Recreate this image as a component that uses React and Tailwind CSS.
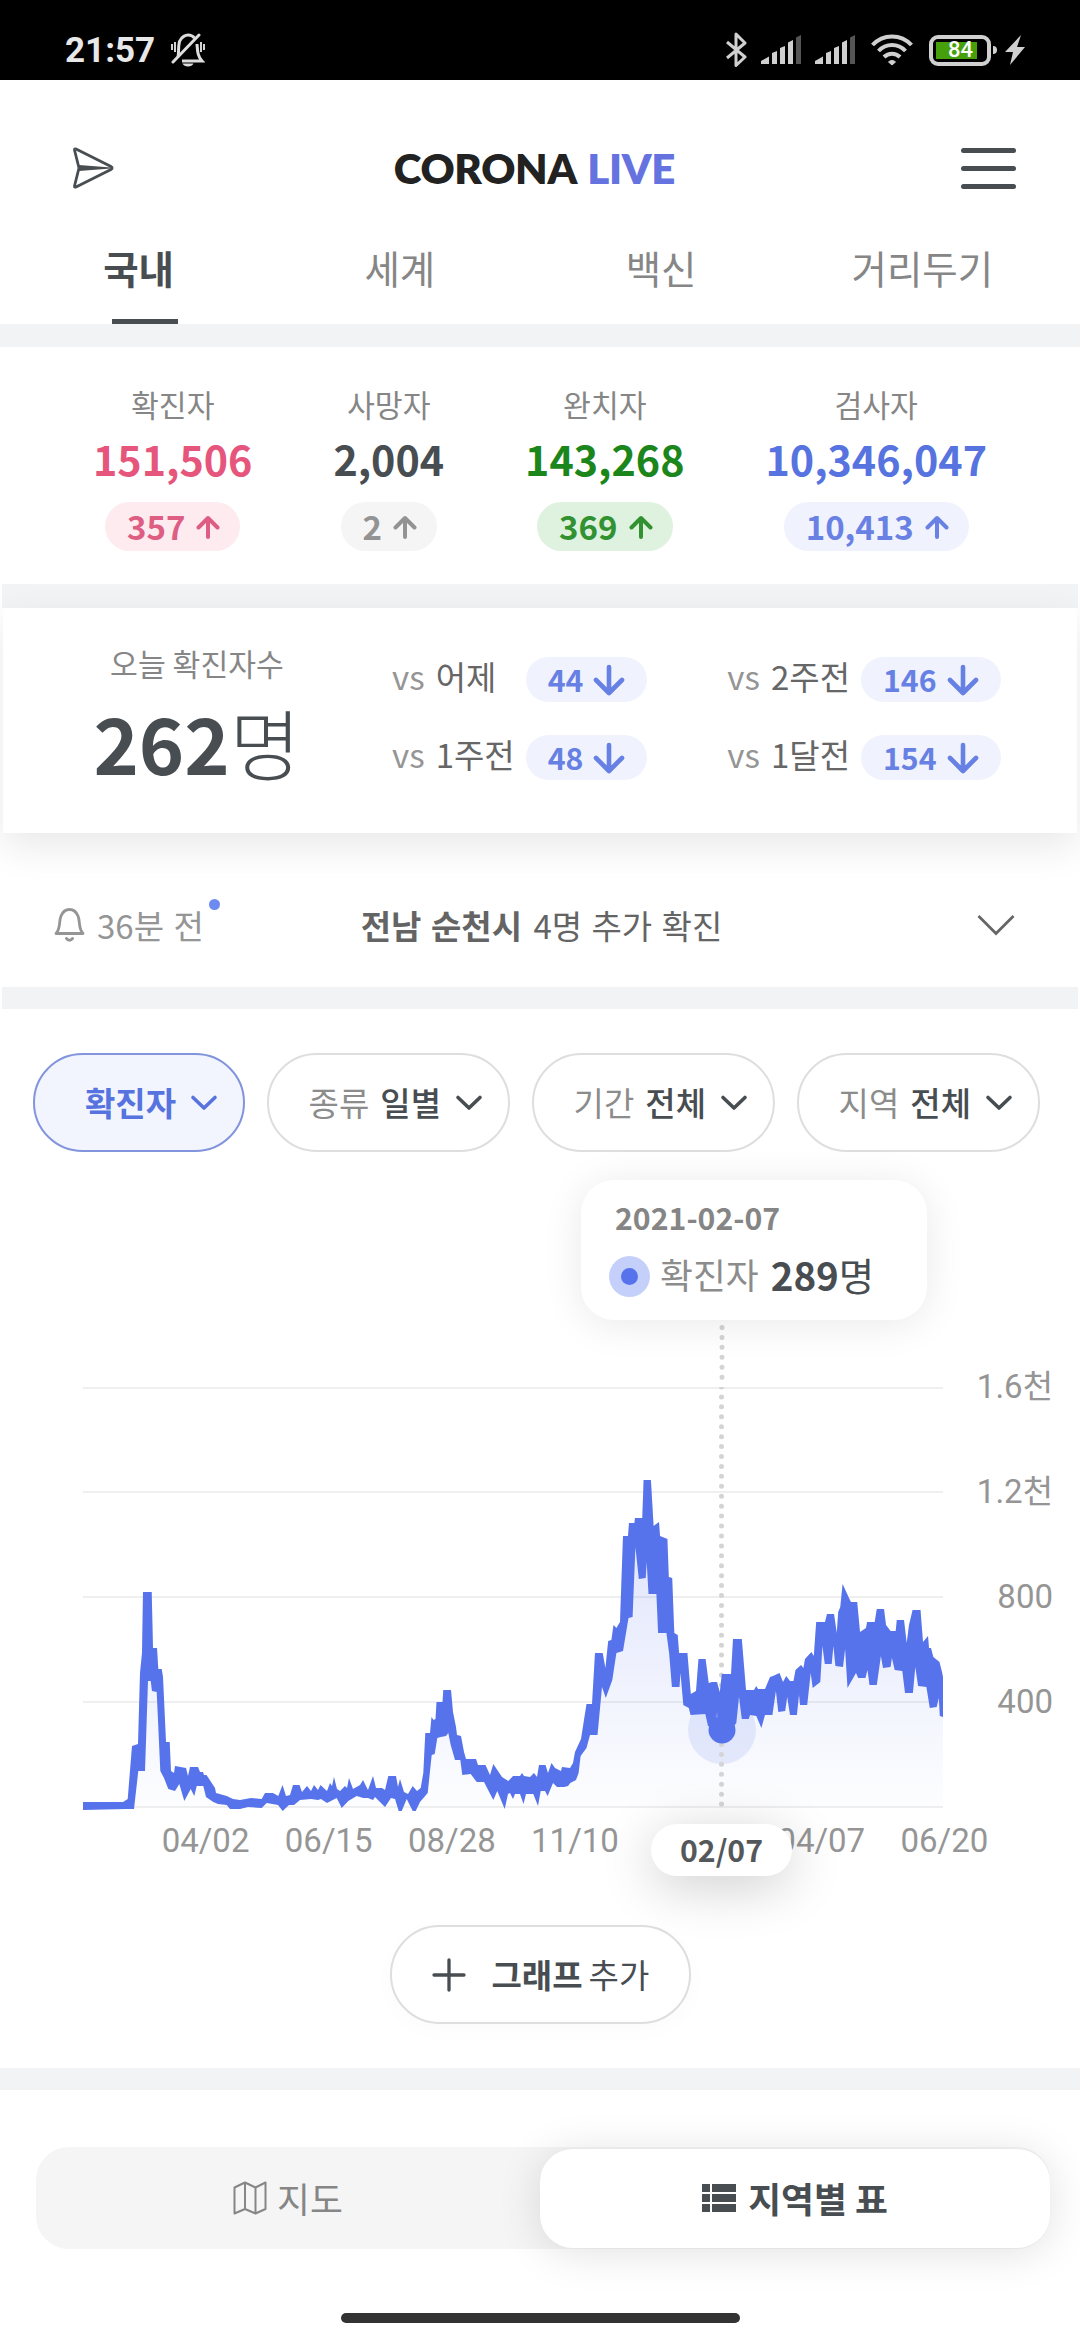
import { useState } from "react";

const BLUE = "#5673eb";

const tabs = ["국내", "세계", "백신", "거리두기"];

const totals = [
  {
    label: "확진자",
    value: "151,506",
    delta: "357",
    color: "text-[#e6567c]",
    pill: "bg-[#fdebef] text-[#de5d83]",
  },
  {
    label: "사망자",
    value: "2,004",
    delta: "2",
    color: "text-[#474d51]",
    pill: "bg-[#f5f5f5] text-[#939393]",
  },
  {
    label: "완치자",
    value: "143,268",
    delta: "369",
    color: "text-[#1b861b]",
    pill: "bg-[#dff1df] text-[#329232]",
  },
  {
    label: "검사자",
    value: "10,346,047",
    delta: "10,413",
    color: "text-[#5673e0]",
    pill: "bg-[#f0f3fe] text-[#6a81e4]",
  },
];

const comparisons = [
  [
    { label: "어제", value: "44" },
    { label: "1주전", value: "48" },
  ],
  [
    { label: "2주전", value: "146" },
    { label: "1달전", value: "154" },
  ],
];

const filters = [
  { value: "확진자", active: true },
  { name: "종류", value: "일별" },
  { name: "기간", value: "전체" },
  { name: "지역", value: "전체" },
];

const yTicks = ["1.6천", "1.2천", "800", "400"];
// the fifth slot sits under the selected date
const xTicks = ["04/02", "06/15", "08/28", "11/10", "", "04/07", "06/20"];

// daily confirmed cases on a 860 x 424 area: highs left to right, lows right to left
const highs =
  "0,415 40,415 44.7,412 49,359 55,357 57,286 59,266 60,205 68.7,205 70,261 74,261 75.3,282 78.7,282 80,290 83,355 86.7,355 88,384 91,386 92,379 103,381 105,389 107,380 115,380 117,385 120,385 121,388 123.5,388 132,401 133,406 143.7,409 150,412 157,413 168,411 178.7,412 182,406 190,406 195.3,409 199.5,398 203,409 207,408 210,398 216.5,398 219,405 224,399 228,404 231,398 235,403 237.5,398 244,404 247,396 249,399 251,390 254,402 257,404 262,399 264,401 266,391 270,402 277,398 280,393 285,403 290,389 293,401 299,401 302,403 305.3,389 313,389 315,400 317,392 321,405 325,407 329.7,399 334,404 337.7,401 340.3,386 342.3,346 347,346 348.5,330 350.5,333 352.5,332 353.5,315 359.5,315 360.3,303 368,303 370,325 373,340 374,348 378,349 381,365 383,372 393,372 395,378 402.5,378 407,388 410.3,377 415,384 419,390 425.3,394 430,389 437,389 439,386 441,389 447,390 451,386 454,390 456,378 462.5,378 465,386 468.5,376 472,381 478,384 479,380 487,381 490,376 492,365 498,352 503.5,317 509,317 512,266 519.7,266 522.4,281 525.2,254 528.4,253 530.5,238 533.4,241 537,235 540,149 545,149 546,136 551.4,136 552,131 559.3,131 560.6,93 567.9,93 570.6,139 576,135 577,149 584.4,152 585.8,190 589.2,191 591.3,246 594.7,248 596.1,266 604.4,266 607.8,307 613,304 615.5,272 622.6,272 625.7,296 629,295 634,295 636.8,305 638.8,287 648,287 650,252 658.8,252 663,303 671,303 673.3,299 675,302 682,302 687,290 690,289 696.5,286 700,295 703.2,289 707,294 710.5,294 712.5,283 718,278 720.4,281 722,272 728.4,265 730.8,269 733.2,235 742,235 744,227 751,227 753.8,246 755.2,225 757.3,220 759.6,197 766.9,213 768,215 774.2,215 777,245 783,241 784.1,235 791.7,235 793.8,222 801,222 803,238 807.6,244 812.7,244 813.8,233 821,233 823.7,256 826,238 829.6,223 837.5,223 840,255 845,249 846,261 848,261 850.3,270 856.5,275 859,285 860,290";

const lows =
  "860,330 856.8,329 855.8,311 853.7,320 846.8,321 843.4,300 835.1,299 832.3,280 829.9,306 822,306 819.3,284 811.7,283 808.9,271 807.6,280 800,281 797.9,269 793.8,298 786.5,298 784.5,283 782.4,291 775.2,291 773,286 764.5,301 762.1,262 760,280 752.4,279 750.4,259 748.7,277 741.8,277 739.4,259 737.3,295 729.7,301 727.7,286 724.2,318 717,318 716,308 713.9,328 707,328 704.2,310 702.2,324 695.3,325 692.9,304 689.4,328 682,328 678.4,341 673.3,329 667,328 665.7,332 658.8,332 656,310 653.3,336 648,343 640,345 635,343 634,325 633,342 625,339 622.3,327 607.5,328 605.8,321 600.3,318 597.5,286 596.5,300 588.9,300 586.1,266 583.4,246 575.1,246 573.4,207 565.5,207 563.7,175 562.7,191 555.8,192 552.4,160 549.6,230 545.5,231 540,264 533.4,266 529.3,293 522.8,311 519,300 514.5,348 507,348 503.5,361 497.6,369 495.6,386 493,393 487.3,396 485,399 481,400 479,400 474,400 470,396 464.6,409 462,404 457.7,404 455,419 450.3,407 443,407 440.5,417 437,407 432,407 430,412 427,406 425,407 421.7,422 414.3,404 410.3,413 401,395 393.7,395 387.7,387 379.3,388 377.3,373 372,373 367.7,358 365.3,346 363,349 357.7,350 354.3,351 351.7,367 348.7,368 344.7,406 337,415 332.7,424 329.7,424 323.7,412 318.7,424 315.7,424 312,412 308,411 302,420 292,410 290,413 285,411 280.3,411 273.7,409 265.3,414 258.7,421 253.7,411 244,416 238,412 235,413 228,412 217,413 211,418 206,418 199.7,424 195,418 183.7,416 178.7,421 165,420 157,422 147,422 143.7,418 135,417 130.3,415 123,410 120.3,399 113.7,399 111.3,409 107.7,402 101.3,414 96.3,397 92,404 85.3,402 81,391 77.3,384 73.7,305 69,304 67.7,294 65,294 62,384 55.3,384 51,422 43.7,422 0,423";

const ArrowUp = () => (
  <svg viewBox="0 0 24 24" className="w-6 h-6" fill="none">
    <path
      d="M12 22V3.5M2.5 12.5L12 3L21.5 12.5"
      stroke="currentColor"
      strokeWidth="4"
      strokeLinecap="round"
      strokeLinejoin="round"
    />
  </svg>
);

const ArrowDown = () => (
  <svg viewBox="0 0 32 32" className="w-8 h-8" fill="none">
    <path
      d="M16 3V28M3 16L16 29L29 16"
      stroke="currentColor"
      strokeWidth="4.6"
      strokeLinecap="round"
      strokeLinejoin="round"
    />
  </svg>
);

const Chevron = () => (
  <svg viewBox="0 0 28 18" className="w-7 h-[18px]" fill="none">
    <path
      d="M3 3.5L14 14L25 3.5"
      stroke="currentColor"
      strokeWidth="3.6"
      strokeLinecap="round"
      strokeLinejoin="round"
    />
  </svg>
);

const Signal = () => (
  <svg viewBox="0 0 40 30" className="w-10 h-[30px]">
    <path d="M0 26L8 21.5V29H0Z" fill="#d0d0d0" />
    <path d="M11 18L16 16V29H11Z" fill="#d0d0d0" />
    <path d="M19 13L24 11V29H19Z" fill="#d0d0d0" />
    <path d="M27 7.5L32 5V29H27Z" fill="#d0d0d0" />
    <path d="M35 2.5L40 0V29H35Z" fill="#555" />
  </svg>
);

const StatusBar = () => (
  <div className="flex h-20 items-center bg-black pl-[65px] pr-[55px] pt-5 text-[#e8e8e8]">
    <span className="font-bold text-[35px] leading-none [font-family:Roboto,sans-serif]">
      21:57
    </span>
    <svg viewBox="0 0 34 34" className="ml-4 h-[34px] w-[34px]" fill="none">
      <path
        d="M7 24C8 20 7 14 8.5 8.500C10.500 3.500 15 2 17 2C19 2 21.500 2.500 23.500 5M26 11C26.500 18 26.500 23 31 28H11"
        stroke="#ddd"
        strokeWidth="3"
      />
      <path d="M11.500 30.500H22.500C21 34.500 13 34.500 11.500 30.500Z" fill="#ddd" />
      <path
        d="M28 2L2 29"
        stroke="#ddd"
        strokeWidth="3"
        strokeLinecap="round"
      />
      <path
        d="M1 11V17M4 9V19M30 9V19M33 11V17"
        stroke="#ddd"
        strokeWidth="1.9"
      />
    </svg>

    <div className="ml-auto flex items-center">
      <svg viewBox="0 0 22 36" className="h-9 w-[22px]" fill="none">
        <path
          d="M2 10L20 25L11 33.5V2L20 11L2 26"
          stroke="#d0d0d0"
          strokeWidth="3"
          strokeLinejoin="round"
        />
      </svg>
      <span className="ml-3.5">
        <Signal />
      </span>
      <span className="ml-3.5">
        <Signal />
      </span>
      <svg viewBox="0 0 42 32" className="ml-4 h-8 w-[42px]" fill="none">
        <path
          d="M1.5 11C12 -0.500 30 -0.500 40.5 11M7.5 17C15 9 27 9 34.5 17M13 23C17.5 18.5 24.500 18.500 29 23"
          stroke="#d0d0d0"
          strokeWidth="4"
        />
        <path
          d="M17.500 28C19.500 26 22.500 26 24.500 28L21 31Z"
          fill="#d0d0d0"
          stroke="#d0d0d0"
        />
      </svg>
      <div className="ml-4 flex h-[31px] w-[62px] items-center rounded-[9px] border-4 border-[#d0d0d0] p-[3px]">
        <div className="flex h-[17px] w-[41px] items-center justify-center bg-[#46a00c] pl-2 text-[22px] font-medium leading-none text-white [font-family:Roboto,sans-serif]">
          84
        </div>
      </div>
      <div className="ml-0.5 h-2 w-1 rounded-r bg-[#d0d0d0]" />
      <svg viewBox="0 0 20 30" className="ml-2 h-[30px] w-5">
        <path d="M16 0L0 17H8L5 30L20 12H12Z" fill="#d0d0d0" />
      </svg>
    </div>
  </div>
);

const Header = () => (
  <header className="flex h-[176px] items-center justify-between pl-[72px] pr-16">
    <svg viewBox="0 0 42 42" className="h-[42px] w-[42px]" fill="none">
      <path
        d="M2.500 3C2.300 2 3 1.500 4 2L39 19.500C40.500 20.300 40.500 21.700 39 22.500L4 40C3 40.500 2.300 40 2.500 39L7 21Z"
        stroke="#474d51"
        strokeWidth="2.8"
        strokeLinejoin="round"
      />
      <path d="M7 18L39 20.500V21.500L7 24Z" fill="#474d51" />
    </svg>
    <h1 className="flex gap-2.5 pr-1.5 text-[42px] font-extrabold leading-none tracking-[-0.25px] text-[#222] [font-family:Lato,sans-serif]">
      CORONA <span className="text-[#6573e0]">LIVE</span>
    </h1>
    <button className="flex w-[55px] flex-col gap-[13px]">
      <span className="h-[5px] rounded-full bg-[#474d51]" />
      <span className="h-[5px] rounded-full bg-[#474d51]" />
      <span className="h-[5px] rounded-full bg-[#474d51]" />
    </button>
  </header>
);

const Tabs = ({ selected, onSelect }) => (
  <nav className="flex h-[68px] pl-[7px] pr-7">
    {tabs.map((tab, i) => (
      <button
        key={tab}
        onClick={() => onSelect(i)}
        className={
          i === selected
            ? "flex flex-1 flex-col items-center justify-between font-bold text-[#474d51]"
            : "flex flex-1 flex-col items-center justify-between text-[#868686]"
        }
      >
        <span className="-mt-2 ml-0.5 text-[38.5px] leading-[38px]">{tab}</span>
        {i === selected && (
          <span className="ml-3.5 h-[5px] w-[66px] bg-[#474d51]" />
        )}
      </button>
    ))}
  </nav>
);

const Totals = () => (
  <section className="flex h-[237px] justify-between bg-white px-[93px] pt-[42px]">
    {totals.map(({ label, value, delta, color, pill }) => (
      <div key={label} className="flex flex-col items-center">
        <span className="text-[30.25px] leading-[30px] text-[#868686]">
          {label}
        </span>
        <span
          className={`mt-[14px] text-[41.25px] font-bold leading-[50px] ${color}`}
        >
          {value}
        </span>
        <span
          className={`mt-[19px] flex h-[49px] items-center gap-[11px] rounded-full pl-[22px] pr-5 text-[33px] font-bold leading-none ${pill}`}
        >
          {delta}
          <ArrowUp />
        </span>
      </div>
    ))}
  </section>
);

const Today = () => (
  <section className="relative mx-[3px] flex h-[225px] bg-white pl-[92px] shadow-[0_14px_36px_rgba(0,0,0,0.09)]">
    <div className="flex w-[204px] flex-col items-center pt-10">
      <span className="text-[30.25px] leading-[30px] text-[#868686]">
        오늘 확진자수
      </span>
      <span className="mt-6 flex text-[77px] leading-[80px] text-[#474d51]">
        <b>262</b>
        <span className="font-light">명</span>
      </span>
    </div>
    <div className="ml-[93px] flex gap-[80px] pt-[49px]">
      {comparisons.map((column, i) => (
        <div key={i} className="flex flex-col gap-[33px]">
          {column.map(({ label, value }) => (
            <div
              key={label}
              className="flex h-[45px] items-center text-[33px] leading-none"
            >
              <span className="pb-1.5 text-[#959595]">vs</span>
              <span className="ml-[11px] w-[90px] whitespace-nowrap pb-1.5 text-[#666]">
                {label}
              </span>
              <span className="flex h-[45px] items-center gap-[10px] rounded-full bg-[#f0f3fe] px-[22px] text-[30.25px] font-bold text-[#6780e4]">
                {value}
                <ArrowDown />
              </span>
            </div>
          ))}
        </div>
      ))}
    </div>
  </section>
);

const Notice = () => (
  <section className="flex h-[154px] items-center bg-white pl-[54px] pr-[65px] pt-[30px] text-[33px] leading-none [word-spacing:2px]">
    <div className="relative flex items-center text-[#959595]">
      <svg viewBox="0 0 31 36" className="mr-3 h-9 w-[31px]" fill="none">
        <path
          d="M2 26.500C7 21 4.500 15 7 9C9 4 12.500 2.500 15.500 2.500C18.500 2.500 22 4 24 9C26.500 15 24 21 29 26.500Z"
          stroke="currentColor"
          strokeWidth="2.8"
          strokeLinejoin="round"
        />
        <path
          d="M12.500 31.500C14 33.800 17 33.800 18.500 31.500"
          stroke="currentColor"
          strokeWidth="3"
          strokeLinecap="round"
        />
      </svg>
      36분 전
      <span className="absolute -right-4 -top-2 h-[11px] w-[11px] rounded-full bg-[#6c8af0]" />
    </div>
    <p className="ml-[157px] text-[#646464]">
      <b className="mr-0.5">전남 순천시</b> 4명 추가 확진
    </p>
    <svg
      viewBox="0 0 38 22"
      className="ml-auto h-[22px] w-[38px]"
      fill="none"
    >
      <path d="M1.5 2L19 19.5L36.5 2" stroke="#666" strokeWidth="2.8" />
    </svg>
  </section>
);

const Filters = () => (
  <div className="flex gap-[22px] pl-[33px] text-[33px] leading-none">
    {filters.map(({ name, value, active }, i) => (
      <button
        key={i}
        className={
          active
            ? "flex h-[99px] w-[212px] items-center justify-end rounded-full border-2 border-[#8294dc] bg-[#f2f5fe] pr-[25px] text-[#5673e0]"
            : "flex h-[99px] w-[243px] items-center justify-end rounded-full border-2 border-[#dedede] pr-[25px] text-[#474d51]"
        }
      >
        {name && <span className="mr-[11px] text-[#8c8c8c]">{name}</span>}
        <span className={active ? "mr-3.5 font-bold" : "mr-3.5 font-medium"}>
          {value}
        </span>
        <Chevron />
      </button>
    ))}
  </div>
);

const Chart = () => (
  <div className="relative mt-[235px] h-[538px] pl-[83px]">
    <div className="flex">
      <svg viewBox="0 0 860 424" className="h-[424px] w-[860px]">
        <defs>
          <linearGradient
            id="area"
            gradientUnits="userSpaceOnUse"
            x1="0"
            y1="93"
            x2="0"
            y2="420"
          >
            <stop offset="0" stopColor={BLUE} stopOpacity="0.22" />
            <stop offset="1" stopColor={BLUE} stopOpacity="0.01" />
          </linearGradient>
        </defs>
        {[1, 105, 210, 315, 420].map((y) => (
          <line
            key={y}
            x1="0"
            x2="860"
            y1={y}
            y2={y}
            stroke="#efefef"
            strokeWidth="2"
          />
        ))}
        <polygon points={`0,420 ${highs} 860,420`} fill="url(#area)" />
        <circle cx="639" cy="343" r="34" fill={BLUE} fillOpacity="0.13" />
        <line
          x1="638.5"
          x2="638.5"
          y1="0"
          y2="424"
          stroke="#d4d4d4"
          strokeWidth="5"
          strokeLinecap="round"
          strokeDasharray="0 9.93"
        />
        <polygon points={`${highs} ${lows}`} fill={BLUE} />
        <circle cx="639" cy="343" r="13.5" fill={BLUE} />
      </svg>
      <ul className="-mt-5 ml-auto flex flex-col gap-[65px] pr-[27px] text-right text-[33px] leading-10 text-[#959595] [font-family:Roboto,'Noto_Sans_CJK_KR',sans-serif]">
        {yTicks.map((tick) => (
          <li key={tick}>{tick}</li>
        ))}
      </ul>
    </div>
    <div className="ml-[61px] mt-2.5 flex w-[862px] text-center text-[33px] leading-10 text-[#959595] [font-family:Roboto,sans-serif]">
      {xTicks.map((tick, i) => (
        <span key={i} className="flex-1">
          {tick}
        </span>
      ))}
    </div>

    {/* cursor line above the plot */}
    <svg
      viewBox="0 0 6 64"
      className="absolute left-[718.5px] -top-[62px] h-16 w-1.5"
    >
      <line
        x1="3"
        x2="3"
        y1="2.5"
        y2="56"
        stroke="#d4d4d4"
        strokeWidth="5"
        strokeLinecap="round"
        strokeDasharray="0 9.93"
      />
    </svg>

    {/* tooltip */}
    <div className="absolute -top-[207px] left-[581px] h-[140px] w-[346px] rounded-[33px] bg-white shadow-[0_4px_40px_rgba(0,0,0,0.09)]">
      <div className="ml-[34px] mt-[19px] text-[30.25px] font-bold leading-9 text-[#858585]">
        2021-02-07
      </div>
      <div className="ml-7 mt-[19px] flex items-center leading-10">
        <span className="mr-2.5 flex h-[41px] w-[41px] items-center justify-center rounded-full bg-[#c5d0fa]">
          <span className="h-[17px] w-[17px] rounded-full bg-[#5673eb]" />
        </span>
        <span className="pb-1 text-[35.75px] text-[#8c8c8c]">확진자</span>
        <span className="ml-3 pb-1 text-[38.5px] text-[#474d51]">
          <b>289</b>명
        </span>
      </div>
    </div>
    <div className="absolute left-[651px] top-[437px] flex h-[52px] w-[141px] items-center justify-center rounded-full bg-white text-[30.25px] font-bold text-[#55585a] shadow-[0_10px_54px_rgba(0,0,0,0.2)]">
      02/07
    </div>
  </div>
);

const ViewSwitch = () => (
  <div className="ml-9 flex h-[102px] w-[1014px] items-center rounded-[33px] bg-[#f5f5f5] text-[35.75px] leading-none">
    <button className="flex flex-1 items-center justify-center gap-2.5 text-[#868686]">
      <svg viewBox="0 0 34 34" className="h-[34px] w-[34px]" fill="none">
        <path
          d="M1.500 6.500L12 1.500V28L1.500 32.500ZM12 1.500L22.500 6.500V32.500L12 28M22.500 6.500L32.500 1.500V28L22.500 32.500"
          stroke="currentColor"
          strokeWidth="2"
          strokeLinejoin="round"
        />
      </svg>
      지도
    </button>
    <button className="flex h-[99px] w-[510px] items-center justify-center gap-3 rounded-[33px] bg-white font-bold text-[#474d51] shadow-[0_4px_44px_rgba(0,0,0,0.12)]">
      <svg viewBox="0 0 34 28" className="h-7 w-[34px]" fill="currentColor">
        <path d="M0 0H8V8H0ZM10 0H34V8H10ZM0 10H8V18H0ZM10 10H34V18H10ZM0 20H8V28H0ZM10 20H34V28H10Z" />
      </svg>
      지역별 표
    </button>
  </div>
);

const App = () => {
  const [selectedTab, setSelectedTab] = useState(0);

  return (
    <div className="h-[2340px] w-[1080px] overflow-hidden bg-white [font-family:'Noto_Sans_CJK_KR',sans-serif]">
      <StatusBar />
      <Header />
      <Tabs selected={selectedTab} onSelect={setSelectedTab} />
      <div className="h-[23px] bg-[#f1f3f5]" />
      <Totals />
      <div className="mx-0.5 h-6 bg-[#f1f3f5]" />
      <Today />
      <Notice />
      <div className="mx-0.5 h-[22px] bg-[#f1f3f5]" />

      <section className="pt-11">
        <Filters />
        <Chart />
        <button className="mx-auto flex h-[99px] w-[301px] items-center rounded-full border-2 border-[#dedede] pl-10 text-[33px] leading-none text-[#474d51] shadow-[0_6px_24px_rgba(0,0,0,0.02)]">
          <svg viewBox="0 0 34 34" className="mr-[26px] h-[34px] w-[34px]">
            <path
              d="M17 2V32M2 17H32"
              stroke="currentColor"
              strokeWidth="3.3"
              strokeLinecap="round"
            />
          </svg>
          <b className="mr-1.5">그래프</b>추가
        </button>
      </section>

      <div className="mb-[57px] mt-11 h-[22px] bg-[#f1f3f5]" />
      <ViewSwitch />
      <div className="mx-auto mt-16 h-2.5 w-[399px] rounded-full bg-[#333]" />
    </div>
  );
};

export default App;
